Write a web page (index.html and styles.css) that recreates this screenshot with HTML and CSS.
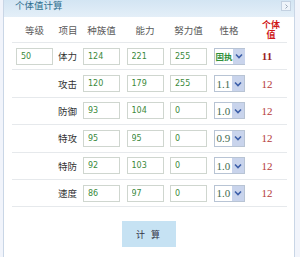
FILE: index.html
```html
<!DOCTYPE html>
<html lang="zh-CN">
<head>
  <meta charset="UTF-8" />
  <meta name="viewport" content="width=device-width, initial-scale=1" />
  <title>个体值计算</title>
  <link rel="stylesheet" href="styles.css">
</head>
<body>
  <div class="panel">
    <div class="panel-head">
      <span class="panel-title">个体值计算</span>
      <span class="panel-btn">
        <svg width="7" height="7" viewBox="0 0 7 7"><path d="M2.5 1.5 L4.5 3.5 L2.5 5.5" fill="none" stroke="#9aa8b8" stroke-width="1"/></svg>
      </span>
    </div>

    <div class="calc">
      <div class="row row-head">
        <div>等级</div>
        <div>项目</div>
        <div>种族值</div>
        <div>能力</div>
        <div>努力值</div>
        <div>性格</div>
        <div class="iv-head"><span>个体</span><span>值</span></div>
      </div>

      <div class="row">
        <div><input class="num" type="text" value="50"></div>
        <div class="stat">体力</div>
        <div><input class="num" type="text" value="124"></div>
        <div><input class="num" type="text" value="221"></div>
        <div><input class="num" type="text" value="255"></div>
        <div><span class="pick pick-cn">固执<span class="arrow"><svg width="8" height="6" viewBox="0 0 8 6"><path d="M1 1.5 L4 4.5 L7 1.5" fill="none" stroke="#3d5fa8" stroke-width="1.6"/></svg></span></span></div>
        <div class="iv iv-first">11</div>
      </div>

      <div class="row">
        <div></div>
        <div class="stat">攻击</div>
        <div><input class="num" type="text" value="120"></div>
        <div><input class="num" type="text" value="179"></div>
        <div><input class="num" type="text" value="255"></div>
        <div><span class="pick">1.1<span class="arrow"><svg width="8" height="6" viewBox="0 0 8 6"><path d="M1 1.5 L4 4.5 L7 1.5" fill="none" stroke="#3d5fa8" stroke-width="1.6"/></svg></span></span></div>
        <div class="iv">12</div>
      </div>

      <div class="row">
        <div></div>
        <div class="stat">防御</div>
        <div><input class="num" type="text" value="93"></div>
        <div><input class="num" type="text" value="104"></div>
        <div><input class="num" type="text" value="0"></div>
        <div><span class="pick">1.0<span class="arrow"><svg width="8" height="6" viewBox="0 0 8 6"><path d="M1 1.5 L4 4.5 L7 1.5" fill="none" stroke="#3d5fa8" stroke-width="1.6"/></svg></span></span></div>
        <div class="iv">12</div>
      </div>

      <div class="row">
        <div></div>
        <div class="stat">特攻</div>
        <div><input class="num" type="text" value="95"></div>
        <div><input class="num" type="text" value="95"></div>
        <div><input class="num" type="text" value="0"></div>
        <div><span class="pick">0.9<span class="arrow"><svg width="8" height="6" viewBox="0 0 8 6"><path d="M1 1.5 L4 4.5 L7 1.5" fill="none" stroke="#3d5fa8" stroke-width="1.6"/></svg></span></span></div>
        <div class="iv">12</div>
      </div>

      <div class="row">
        <div></div>
        <div class="stat">特防</div>
        <div><input class="num" type="text" value="92"></div>
        <div><input class="num" type="text" value="103"></div>
        <div><input class="num" type="text" value="0"></div>
        <div><span class="pick">1.0<span class="arrow"><svg width="8" height="6" viewBox="0 0 8 6"><path d="M1 1.5 L4 4.5 L7 1.5" fill="none" stroke="#3d5fa8" stroke-width="1.6"/></svg></span></span></div>
        <div class="iv">12</div>
      </div>

      <div class="row">
        <div></div>
        <div class="stat">速度</div>
        <div><input class="num" type="text" value="86"></div>
        <div><input class="num" type="text" value="97"></div>
        <div><input class="num" type="text" value="0"></div>
        <div><span class="pick">1.0<span class="arrow"><svg width="8" height="6" viewBox="0 0 8 6"><path d="M1 1.5 L4 4.5 L7 1.5" fill="none" stroke="#3d5fa8" stroke-width="1.6"/></svg></span></span></div>
        <div class="iv">12</div>
      </div>
    </div>

    <div class="actions">
      <button class="calc-btn" type="button">计 算</button>
    </div>
  </div>
</body>
</html>
```

FILE: styles.css
```css
body {
  margin: 0;
  background-color: #f1f4fb;
  font-family: "Noto Sans CJK SC", "DejaVu Sans", sans-serif;
}
.panel {
  margin-left: 3px;
  width: 290px;
  height: 257px;
  background: white;
  border-left: 1px solid #c9d6e6;
  border-right: 1px solid #c9d6e6;
}
.panel-head {
  height: 17px;
  display: flex;
  justify-content: space-between;
  align-items: flex-start;
  padding: 0 3px 0 11px;
  background: linear-gradient(#d3e5f3, #e4eff8);
}
.panel-title {
  font-size: 9.5px;
  line-height: 11px;
  color: #2f6f8f;
}
.panel-btn {
  margin-top: 1px;
  width: 8px;
  height: 8px;
  border: 1px solid #c3d1e1;
  background: #eef4fa;
  display: flex;
  align-items: center;
  justify-content: center;
}
.calc {
  padding-left: 8px;
  width: 275px;
}
.row {
  display: grid;
  grid-template-columns: 45px 22px 45px 42px 45px 36px 40px;
  align-items: center;
  height: 27.4px;
  box-sizing: border-box;
  border-bottom: 1px solid #e6e9ec;
  font-size: 9.5px;
  white-space: nowrap;
}
.row > div {
  display: flex;
  justify-content: center;
}
.row-head {
  height: 26px;
  color: #5a5a5a;
}
.row > .iv-head {
  flex-direction: column;
  align-items: center;
  color: #d01818;
  font-weight: bold;
  font-size: 9px;
  line-height: 10px;
  padding-left: 8px;
}
.row > .stat {
  justify-content: flex-end;
  padding-right: 2px;
  color: #333;
}
.num {
  width: 37px;
  height: 17px;
  box-sizing: border-box;
  border: 1px solid #cfd6cf;
  padding: 0 0 0 4px;
  margin: 0;
  font-family: "DejaVu Sans", sans-serif;
  font-size: 8px;
  color: #3b8a3b;
  outline: none;
}
.pick {
  width: 31px;
  height: 17px;
  box-sizing: border-box;
  border: 1px solid #b8c4d4;
  display: flex;
  align-items: center;
  justify-content: space-between;
  padding-left: 2px;
  font-family: "Liberation Serif", serif;
  font-size: 11px;
  color: #3f6b50;
}
.pick-cn {
  font-family: "Noto Sans CJK SC", sans-serif;
  font-weight: bold;
  font-size: 8.5px;
  color: #2f8f3a;
  padding-left: 1px;
}
.arrow {
  width: 12px;
  height: 15px;
  flex-shrink: 0;
  background: #c9d4ec;
  display: flex;
  align-items: center;
  justify-content: center;
}
.iv {
  font-family: "Liberation Serif", serif;
  font-size: 11px;
  color: #b43a3a;
}
.row > .iv-first {
  color: #9a1e1e;
  font-weight: bold;
}
.actions {
  display: flex;
  justify-content: center;
  margin-top: 14px;
}
.calc-btn {
  width: 54px;
  height: 26px;
  border: none;
  background-color: #c6e2f3;
  color: #334;
  font-family: "Noto Sans CJK SC", sans-serif;
  font-size: 9px;
  letter-spacing: 2px;
  padding: 0;
}
```
